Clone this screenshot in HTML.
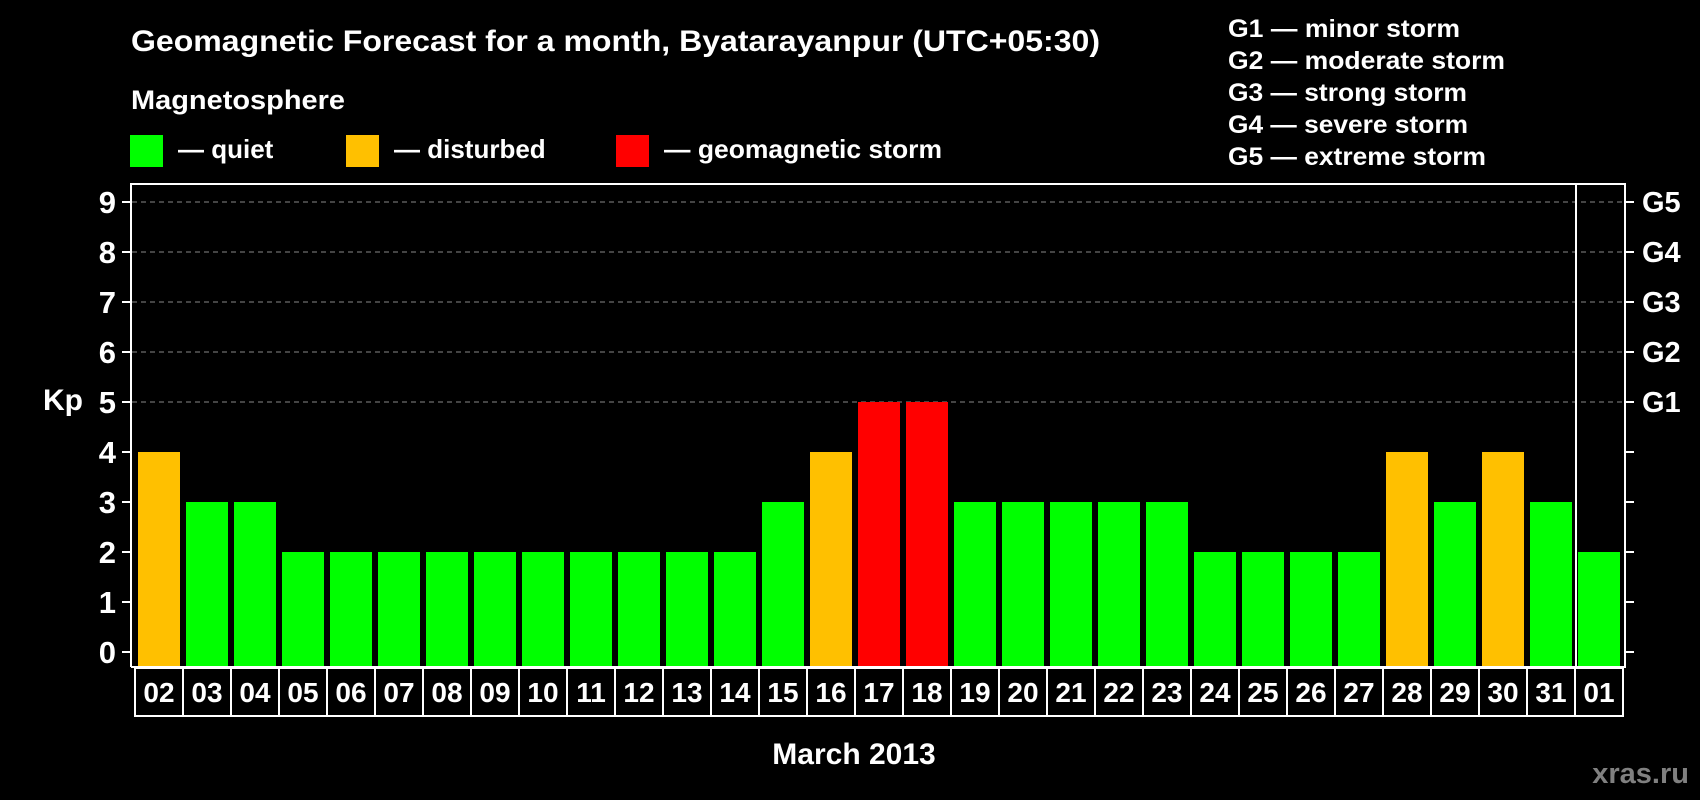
<!DOCTYPE html>
<html><head><meta charset="utf-8"><style>
html,body{margin:0;padding:0;background:#000;width:1700px;height:800px;overflow:hidden}
svg{display:block}
text{font-family:"Liberation Sans",Arial,sans-serif;font-weight:bold;fill:#fff}
</style></head><body>
<svg width="1700" height="800" viewBox="0 0 1700 800" xmlns="http://www.w3.org/2000/svg">
<rect width="1700" height="800" fill="#000"/>
<text x="131" y="51" font-size="30" textLength="969" lengthAdjust="spacingAndGlyphs">Geomagnetic Forecast for a month, Byatarayanpur (UTC+05:30)</text>
<text x="131" y="109" font-size="27" textLength="214" lengthAdjust="spacingAndGlyphs">Magnetosphere</text>
<rect x="130" y="135" width="33" height="32" fill="#00ff00"/>
<text x="178" y="158" font-size="26">— quiet</text>
<rect x="346" y="135" width="33" height="32" fill="#ffc000"/>
<text x="394" y="158" font-size="26">— disturbed</text>
<rect x="616" y="135" width="33" height="32" fill="#ff0000"/>
<text x="664" y="158" font-size="26" textLength="278" lengthAdjust="spacingAndGlyphs">— geomagnetic storm</text>
<g font-size="25">
<text x="1228" y="37" textLength="232" lengthAdjust="spacingAndGlyphs">G1 — minor storm</text>
<text x="1228" y="69" textLength="277" lengthAdjust="spacingAndGlyphs">G2 — moderate storm</text>
<text x="1228" y="101" textLength="239" lengthAdjust="spacingAndGlyphs">G3 — strong storm</text>
<text x="1228" y="133" textLength="240" lengthAdjust="spacingAndGlyphs">G4 — severe storm</text>
<text x="1228" y="165" textLength="258" lengthAdjust="spacingAndGlyphs">G5 — extreme storm</text>
</g>
<g stroke="#888" stroke-width="1" stroke-dasharray="5,4">
<line x1="132" y1="202" x2="1624" y2="202"/>
<line x1="132" y1="252" x2="1624" y2="252"/>
<line x1="132" y1="302" x2="1624" y2="302"/>
<line x1="132" y1="352" x2="1624" y2="352"/>
<line x1="132" y1="402" x2="1624" y2="402"/>
</g>
<g id="bars"></g>
<g stroke="#fff" stroke-width="2" fill="none">
<polyline points="131,667 131,184 1625,184 1625,667 131,667"/>
<line x1="1576" y1="184" x2="1576" y2="667"/>
</g>
<g stroke="#fff" stroke-width="2">
<line x1="122" y1="202" x2="131" y2="202"/><line x1="122" y1="252" x2="131" y2="252"/>
<line x1="122" y1="302" x2="131" y2="302"/><line x1="122" y1="352" x2="131" y2="352"/>
<line x1="122" y1="402" x2="131" y2="402"/><line x1="122" y1="452" x2="131" y2="452"/>
<line x1="122" y1="502" x2="131" y2="502"/><line x1="122" y1="552" x2="131" y2="552"/>
<line x1="122" y1="602" x2="131" y2="602"/><line x1="122" y1="652" x2="131" y2="652"/>
<line x1="1625" y1="202" x2="1634" y2="202"/><line x1="1625" y1="252" x2="1634" y2="252"/>
<line x1="1625" y1="302" x2="1634" y2="302"/><line x1="1625" y1="352" x2="1634" y2="352"/>
<line x1="1625" y1="402" x2="1634" y2="402"/><line x1="1625" y1="452" x2="1634" y2="452"/>
<line x1="1625" y1="502" x2="1634" y2="502"/><line x1="1625" y1="552" x2="1634" y2="552"/>
<line x1="1625" y1="602" x2="1634" y2="602"/><line x1="1625" y1="652" x2="1634" y2="652"/>
</g>
<g font-size="31" text-anchor="end">
<text x="116" y="213">9</text><text x="116" y="263">8</text><text x="116" y="313">7</text>
<text x="116" y="363">6</text><text x="116" y="413">5</text><text x="116" y="463">4</text>
<text x="116" y="513">3</text><text x="116" y="563">2</text><text x="116" y="613">1</text>
<text x="116" y="663">0</text>
</g>
<text x="43" y="410" font-size="30">Kp</text>
<g font-size="29">
<text x="1642" y="212">G5</text><text x="1642" y="262">G4</text><text x="1642" y="312">G3</text>
<text x="1642" y="362">G2</text><text x="1642" y="412">G1</text>
</g>
<g id="labels"></g>
<text x="854" y="764" font-size="30" text-anchor="middle">March 2013</text>
<text x="1689" y="783" font-size="29" text-anchor="end" style="fill:#808080">xras.ru</text>
<script>
var days=["02","03","04","05","06","07","08","09","10","11","12","13","14","15","16","17","18","19","20","21","22","23","24","25","26","27","28","29","30","31","01"];
var v=[4,3,3,2,2,2,2,2,2,2,2,2,2,3,4,5,5,3,3,3,3,3,2,2,2,2,4,3,4,3,2];
var ns="http://www.w3.org/2000/svg",b=document.getElementById("bars"),l=document.getElementById("labels");
for(var i=0;i<31;i++){
 var x=138+i*48,c=v[i]>=5?"#ff0000":(v[i]==4?"#ffc000":"#00ff00");
 var r=document.createElementNS(ns,"rect");r.setAttribute("x",x);r.setAttribute("y",652-v[i]*50);r.setAttribute("width",42);r.setAttribute("height",15+v[i]*50);r.setAttribute("fill",c);b.appendChild(r);
 var bx=135+i*48;
 var rr=document.createElementNS(ns,"rect");rr.setAttribute("x",bx);rr.setAttribute("y",668);rr.setAttribute("width",48);rr.setAttribute("height",48);rr.setAttribute("fill","none");rr.setAttribute("stroke","#fff");rr.setAttribute("stroke-width","2");l.appendChild(rr);
 var t=document.createElementNS(ns,"text");t.setAttribute("x",bx+24);t.setAttribute("y",702);t.setAttribute("font-size","28");t.setAttribute("text-anchor","middle");t.textContent=days[i];l.appendChild(t);
}
</script>
</svg>
</body></html>
